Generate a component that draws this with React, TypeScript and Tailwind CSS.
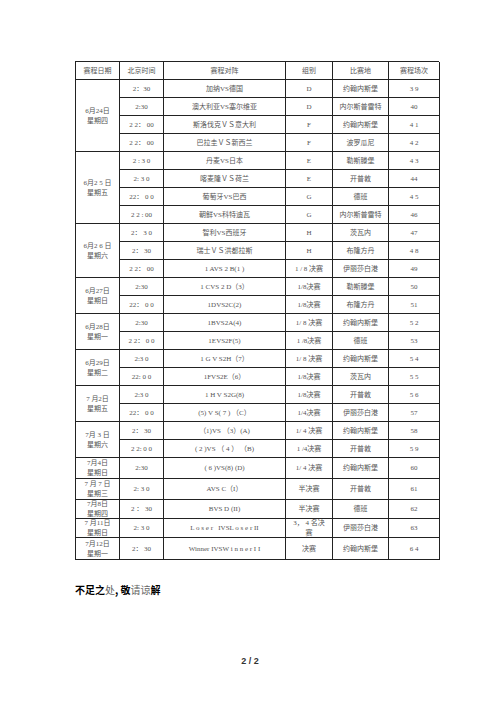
import React from "react";

type Row = { time: string; match: React.ReactNode; group: React.ReactNode; venue: string; no: string };
type Day = { d1: string; d2: string; rows: Row[] };

const days: Day[] = [
  {
    d1: "6月24日",
    d2: "星期四",
    rows: [
      { time: "2：30", match: "加纳VS德国", group: "D", venue: "约翰内斯堡", no: "3 9" },
      { time: "2:30", match: "澳大利亚VS塞尔维亚", group: "D", venue: "内尔斯普雷特", no: "40" },
      { time: "2 2： 00", match: "斯洛伐克ＶＳ意大利", group: "F", venue: "约翰内斯堡", no: "4 1" },
      { time: "2 2： 00", match: "巴拉圭ＶＳ新西兰", group: "F", venue: "波罗瓜尼", no: "4 2" },
    ],
  },
  {
    d1: "6月2 5 日",
    d2: "星期五",
    rows: [
      { time: "2 : 3 0", match: "丹麦VS日本", group: "E", venue: "勒斯滕堡", no: "4 3" },
      { time: "2: 3 0", match: "喀麦隆ＶＳ荷兰", group: "E", venue: "开普敦", no: "44" },
      { time: "22： 0 0", match: "葡萄牙VS巴西", group: "G", venue: "德班", no: "4 5" },
      { time: "2 2 : 00", match: "朝鲜VS科特迪瓦", group: "G", venue: "内尔斯普雷特", no: "46" },
    ],
  },
  {
    d1: "6月2 6 日",
    d2: "星期六",
    rows: [
      { time: "2： 3 0", match: "智利VS西班牙", group: "H", venue: "茨瓦内", no: "47" },
      { time: "2： 30", match: "瑞士ＶＳ洪都拉斯", group: "H", venue: "布隆方丹", no: "4 8" },
      { time: "2 2： 00", match: "1 AVS 2 B(1 )", group: "1 / 8 决赛", venue: "伊丽莎白港", no: "49" },
    ],
  },
  {
    d1: "6月27日",
    d2: "星期日",
    rows: [
      { time: "2:30", match: "1 CVS 2 D（3）", group: "1/8决赛", venue: "勒斯滕堡", no: "50" },
      { time: "22： 0 0", match: "1DVS2C(2)", group: "1/8决赛", venue: "布隆方丹", no: "51" },
    ],
  },
  {
    d1: "6月28日",
    d2: "星期一",
    rows: [
      { time: "2:30", match: "1BVS2A(4)", group: "1/ 8 决赛", venue: "约翰内斯堡", no: "5 2" },
      { time: "2 2： 0 0", match: "1EVS2F(5)", group: "1 /8决赛", venue: "德班", no: "53" },
    ],
  },
  {
    d1: "6月29日",
    d2: "星期二",
    rows: [
      { time: "2:3 0", match: "1 G V S2H（7）", group: "1/ 8 决赛", venue: "约翰内斯堡", no: "5 4" },
      { time: "22: 0 0", match: "1FVS2E（6）", group: "1/8决赛", venue: "茨瓦内", no: "5 5" },
    ],
  },
  {
    d1: "7 月2日",
    d2: "星期五",
    rows: [
      { time: "2:3 0", match: "1 H V S2G(8)", group: "1/8决赛", venue: "开普敦", no: "5 6" },
      { time: "22： 0 0", match: "(5) V S( 7 ) （C）", group: "1/4决赛", venue: "伊丽莎白港", no: "57" },
    ],
  },
  {
    d1: "7月 3 日",
    d2: "星期六",
    rows: [
      { time: "2： 30", match: "（1)VS （3）(A)", group: "1/ 4 决赛", venue: "约翰内斯堡", no: "58" },
      { time: "2 2: 0 0", match: "( 2 )VS （ 4 ） （B)", group: "1 /4决赛", venue: "开普敦", no: "5 9" },
    ],
  },
  { d1: "7月4日", d2: "星期日", rows: [{ time: "2:30", match: "( 6 )VS(8) (D)", group: "1/ 4 决赛", venue: "约翰内斯堡", no: "60" }] },
  { d1: "7 月 7 日", d2: "星期三", rows: [{ time: "2: 3 0", match: "AVS C（I）", group: "半决赛", venue: "开普敦", no: "61" }] },
  { d1: "7月8日", d2: "星期四", rows: [{ time: "2 ： 30", match: "BVS D (II)", group: "半决赛", venue: "德班", no: "62" }] },
  {
    d1: "7 月11日",
    d2: "星期日",
    rows: [
      {
        time: "2: 3 0",
        match: "L o s e r   IVSL o s e r II",
        group: (
          <>
            3， 4 名决
            <br />赛
          </>
        ),
        venue: "伊丽莎白港",
        no: "63",
      },
    ],
  },
  { d1: "7月12日", d2: "星期一", rows: [{ time: "2： 30", match: "Winner IVSW i n n e r I I", group: "决赛", venue: "约翰内斯堡", no: "6 4" }] },
];

const spanClass: Record<number, string> = {
  1: "row-span-1",
  2: "row-span-2",
  3: "row-span-3",
  4: "row-span-4",
};

const cell =
  "border-r border-b border-[#222] flex items-center justify-center text-center whitespace-pre leading-[10px]";

export default function App() {
  return (
    <div
      className="w-[500px] h-[707px] bg-white text-[#555] pt-[61px] pl-[75px]"
      style={{ fontFamily: '"Liberation Serif", "Noto Sans CJK SC", serif' }}
    >
      <div className="w-[364px] border-l border-t border-[#222] grid grid-cols-[44px_44px_122px_47px_56px_51px] grid-rows-[18px_repeat(21,18px)_21px_21px_19px_19px_22px] text-[7px]">
        {["赛程日期", "北京时间", "赛程对阵", "组别", "比赛地", "赛程场次"].map((h) => (
          <div key={h} className={cell}>
            {h}
          </div>
        ))}
        {days.map((day, di) => (
          <React.Fragment key={di}>
            <div className={`${cell} ${spanClass[day.rows.length]} flex-col`}>
              <span>{day.d1}</span>
              <span>{day.d2}</span>
            </div>
            {day.rows.map((r, ri) => (
              <React.Fragment key={ri}>
                <div className={`${cell} col-start-2`}>{r.time}</div>
                <div className={cell}>{r.match}</div>
                <div className={cell}>{r.group}</div>
                <div className={cell}>{r.venue}</div>
                <div className={cell}>{r.no}</div>
              </React.Fragment>
            ))}
          </React.Fragment>
        ))}
      </div>
      <div
        className="mt-[23px] text-[10px] leading-[14px] text-black"
        style={{ fontFamily: '"Noto Sans CJK SC", sans-serif' }}
      >
        <span className="font-bold">不足之</span>
        <span className="text-[#666]">处</span>
        <span className="font-bold">, 敬</span>
        <span className="text-[#666]">请谅</span>
        <span className="font-bold">解</span>
      </div>
      <div
        className="w-[350px] mt-[58px] text-center text-[9px] leading-[12px] font-bold text-[#333]"
        style={{ fontFamily: '"Liberation Sans", sans-serif' }}
      >
        2 / 2
      </div>
    </div>
  );
}
